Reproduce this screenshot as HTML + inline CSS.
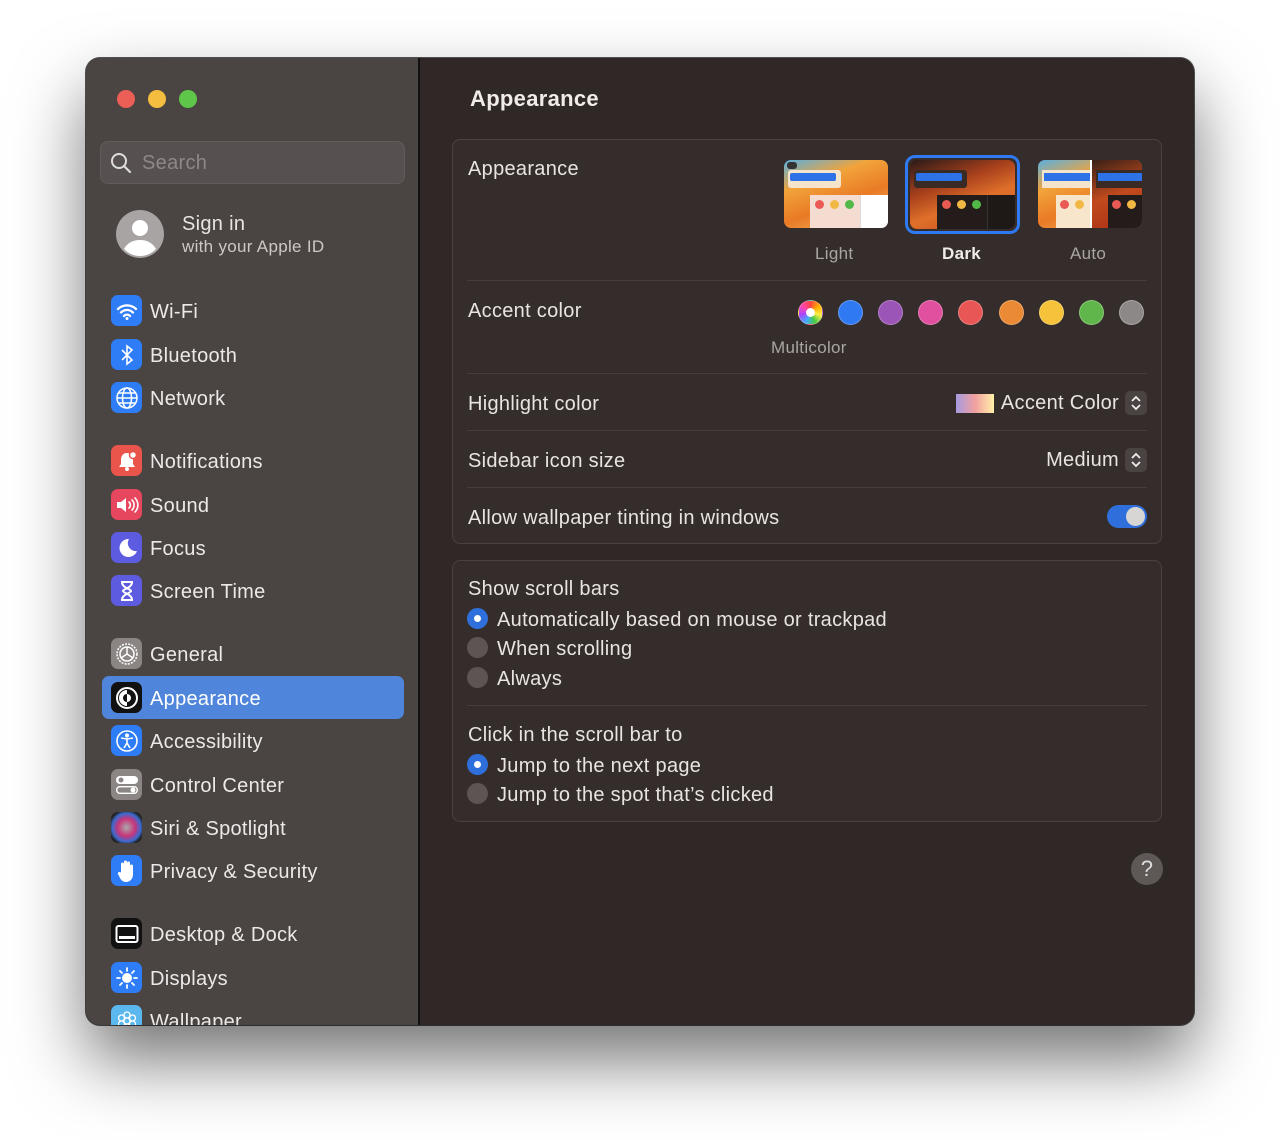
<!DOCTYPE html>
<html><head><meta charset="utf-8"><style>
*{margin:0;padding:0;box-sizing:border-box}
body{width:1280px;height:1140px;background:#fff;font-family:"Liberation Sans",sans-serif;position:relative;overflow:hidden;color:#e8e4e2;letter-spacing:0.3px}
.win{position:absolute;left:86px;top:58px;width:1108px;height:967px;border-radius:14px;background:#302826;overflow:hidden;box-shadow:0 35px 70px rgba(0,0,0,.55),0 0 0 1px #555;}
.side{position:absolute;left:0;top:0;width:334px;height:967px;background:#4a4442;border-right:2px solid #111}
.a{position:absolute}
.dot{position:absolute;top:32px;width:18px;height:18px;border-radius:50%}
.it{position:absolute;left:25px;height:31px;display:flex;align-items:center;font-size:20px;color:#eceae8;padding-top:3px}
.ic{width:31px;height:31px;border-radius:7px;margin-right:8px;display:flex;align-items:center;justify-content:center;flex:none;margin-top:-3px}
.grp{position:absolute;left:366px;width:710px;border:1px solid #4a4240;border-radius:8px;background:#352d2b}
.lbl{position:absolute;font-size:20px;color:#e8e4e2;line-height:24px;margin-top:1px}
.sep{position:absolute;left:14px;right:14px;height:1px;background:#463e3c}
.sw{position:absolute;top:241px;width:25px;height:25px;border-radius:50%;border:1px solid rgba(255,255,255,.25)}
.rad{position:absolute;left:14px;width:21px;height:21px;border-radius:50%;background:#5c5553}
.rad.on{background:#2f6fdc}
.rad.on::after{content:"";position:absolute;left:7px;top:7px;width:7px;height:7px;border-radius:50%;background:#fff}
.th{position:absolute;top:20px;width:104px;height:68px;border-radius:7px;overflow:hidden}
.step{display:inline-block;width:22px;height:24px;border-radius:5px;background:#4a4341;vertical-align:middle;margin-left:6px;position:relative}
</style></head><body>
<div class="win">
 <div class="side">
  <div class="dot" style="left:31px;background:#ec5f57"></div>
  <div class="dot" style="left:62px;background:#f4bd3f"></div>
  <div class="dot" style="left:93px;background:#5ec648"></div>
  <div class="a" style="left:14px;top:83px;width:305px;height:43px;border-radius:8px;background:#565050;border:1px solid #625b59"></div>
  <svg class="a" style="left:24px;top:94px" width="22" height="22" viewBox="0 0 22 22"><circle cx="9" cy="9" r="7" fill="none" stroke="#ddd" stroke-width="2"/><path d="M14 14l6 6" stroke="#ddd" stroke-width="2.2" stroke-linecap="round"/></svg>
  <div class="a" style="left:56px;top:94px;font-size:20px;color:#8f8886">Search</div>
  <svg class="a" style="left:29px;top:151px" width="50" height="50" viewBox="0 0 50 50"><circle cx="25" cy="25" r="24" fill="#a8a4a3"/><circle cx="25" cy="19" r="8" fill="#fff"/><path d="M9 40c4-7 10-9 16-9s12 2 16 9c-5 5-10 7-16 7s-11-2-16-7z" fill="#fff"/></svg>
  <div class="a" style="left:96px;top:155px;font-size:20px">Sign in</div>
  <div class="a" style="left:96px;top:179px;font-size:17px;color:#cdc8c6">with your Apple ID</div>

  <div class="a" style="left:16px;top:618px;width:302px;height:43px;border-radius:7px;background:#4f85da"></div>

  <div class="it" style="top:237px"><div class="ic" style="background:#2f7df6"><svg width="22" height="18" viewBox="0 0 22 18"><path d="M2 7a13 13 0 0 1 18 0M5 10.5a8.5 8.5 0 0 1 12 0M8 14a4 4 0 0 1 6 0" fill="none" stroke="#fff" stroke-width="2.3" stroke-linecap="round"/><circle cx="11" cy="16.5" r="1.5" fill="#fff"/></svg></div>Wi-Fi</div>
  <div class="it" style="top:281px"><div class="ic" style="background:#2f7df6"><svg width="14" height="22" viewBox="0 0 14 22"><path d="M2 6l10 10-5 4V2l5 4-10 10" fill="none" stroke="#fff" stroke-width="1.6"/></svg></div>Bluetooth</div>
  <div class="it" style="top:324px"><div class="ic" style="background:#2f7df6"><svg width="24" height="24" viewBox="0 0 24 24" fill="none" stroke="#fff" stroke-width="1.5"><circle cx="12" cy="12" r="10"/><ellipse cx="12" cy="12" rx="4.5" ry="10"/><path d="M2 12h20M4 7h16M4 17h16"/></svg></div>Network</div>
  <div class="it" style="top:387px"><div class="ic" style="background:#e9554a"><svg width="22" height="22" viewBox="0 0 22 22"><path d="M11 3c-4 0-6 3-6 7v4l-2 3h16l-2-3v-4c0-4-2-7-6-7z" fill="#fff"/><circle cx="11" cy="19" r="2" fill="#fff"/><circle cx="17" cy="5" r="3.5" fill="#fff" stroke="#e9554a" stroke-width="1.5"/></svg></div>Notifications</div>
  <div class="it" style="top:431px"><div class="ic" style="background:#e6475e"><svg width="24" height="20" viewBox="0 0 24 20"><path d="M2 7h4l5-4v14l-5-4H2z" fill="#fff"/><path d="M14 7a4 4 0 0 1 0 6M17 5a7 7 0 0 1 0 10M20 3a10 10 0 0 1 0 14" fill="none" stroke="#fff" stroke-width="1.6" stroke-linecap="round"/></svg></div>Sound</div>
  <div class="it" style="top:474px"><div class="ic" style="background:#5d5ce0"><svg width="22" height="22" viewBox="0 0 22 22"><path d="M13 2a9 9 0 1 0 8 12A8 8 0 0 1 13 2z" fill="#fff"/></svg></div>Focus</div>
  <div class="it" style="top:517px"><div class="ic" style="background:#5d5ce0"><svg width="16" height="22" viewBox="0 0 16 22"><path d="M2 2h12M2 20h12M3 2c0 6 9 7 9 9s-9 3-9 9M13 2c0 6-9 7-9 9s9 3 9 9" fill="none" stroke="#fff" stroke-width="2"/></svg></div>Screen Time</div>
  <div class="it" style="top:580px"><div class="ic" style="background:#8b8584"><svg width="26" height="26" viewBox="0 0 26 26" fill="none" stroke="#fff" stroke-width="1.5"><circle cx="13" cy="13" r="10" stroke-dasharray="2 1.2"/><circle cx="13" cy="13" r="7"/><path d="M13 13V6M13 13l6 4M13 13l-6 4"/></svg></div>General</div>
  <div class="it" style="top:624px"><div class="ic" style="background:#111"><svg width="24" height="24" viewBox="0 0 24 24"><circle cx="12" cy="12" r="10" fill="none" stroke="#fff" stroke-width="2"/><path d="M12 4a8 8 0 0 0 0 16z" fill="#fff"/><circle cx="12" cy="12" r="4" fill="#111"/><path d="M12 8a4 4 0 0 1 0 8z" fill="#fff"/></svg></div><span style="color:#fff">Appearance</span></div>
  <div class="it" style="top:667px"><div class="ic" style="background:#2f7df6"><svg width="24" height="24" viewBox="0 0 24 24" fill="none" stroke="#fff" stroke-width="1.6"><circle cx="12" cy="12" r="10"/><circle cx="12" cy="6.5" r="1.3" fill="#fff"/><path d="M6 9l6 1 6-1M12 10v4l-3 5M12 14l3 5"/></svg></div>Accessibility</div>
  <div class="it" style="top:711px"><div class="ic" style="background:#8b8584"><svg width="24" height="22" viewBox="0 0 24 22"><rect x="1" y="2" width="22" height="8" rx="4" fill="#fff"/><circle cx="6" cy="6" r="2.5" fill="#8b8584"/><rect x="1.7" y="12.7" width="20.6" height="6.6" rx="3.3" fill="none" stroke="#fff" stroke-width="1.4"/><circle cx="18" cy="16" r="2.5" fill="#fff"/></svg></div>Control Center</div>
  <div class="it" style="top:754px"><div class="ic" style="background:radial-gradient(circle,#aaa 0,#c7357a 40%,#3a6bd0 65%,#222 80%)"></div>Siri &amp; Spotlight</div>
  <div class="it" style="top:797px"><div class="ic" style="background:#2f7df6"><svg width="20" height="24" viewBox="0 0 20 24"><path d="M4 13V5a1.5 1.5 0 0 1 3 0v6V3a1.5 1.5 0 0 1 3 0v8V4a1.5 1.5 0 0 1 3 0v8V7a1.5 1.5 0 0 1 3 0v8c0 5-3 8-7 8-3 0-5-2-6-4l-2-4a1.5 1.5 0 0 1 3-1z" fill="#fff"/></svg></div>Privacy &amp; Security</div>
  <div class="it" style="top:860px"><div class="ic" style="background:#111"><svg width="24" height="20" viewBox="0 0 24 20"><rect x="1.5" y="2" width="21" height="16" rx="2" fill="none" stroke="#fff" stroke-width="2"/><rect x="4" y="12" width="16" height="3" fill="#fff"/></svg></div>Desktop &amp; Dock</div>
  <div class="it" style="top:904px"><div class="ic" style="background:#2f7df6"><svg width="24" height="24" viewBox="0 0 24 24"><circle cx="12" cy="12" r="5" fill="#fff"/><path d="M12 2v3M12 19v3M2 12h3M19 12h3M5 5l2 2M17 17l2 2M5 19l2-2M17 7l2-2" stroke="#fff" stroke-width="1.8" stroke-linecap="round"/></svg></div>Displays</div>
  <div class="it" style="top:947px"><div class="ic" style="background:#5ab8ee"><svg width="24" height="24" viewBox="0 0 24 24" fill="none" stroke="#fff" stroke-width="1.3"><circle cx="12" cy="12" r="3"/><circle cx="12" cy="6" r="3"/><circle cx="12" cy="18" r="3"/><circle cx="6.5" cy="9" r="3"/><circle cx="17.5" cy="9" r="3"/><circle cx="6.5" cy="15" r="3"/><circle cx="17.5" cy="15" r="3"/></svg></div>Wallpaper</div>
 </div>

 <div class="a" style="left:384px;top:28px;font-size:22px;font-weight:bold;color:#f0ecea">Appearance</div>

 <div class="grp" style="top:81px;height:405px">
  <div class="lbl" style="left:15px;top:16px">Appearance</div>
  <div class="th" style="left:331px;background:linear-gradient(160deg,#5ab0e0 0,#f2a33a 30%,#e97a26 60%,#f4c070 100%)">
   <div class="a" style="left:3px;top:2px;width:10px;height:7px;border-radius:3px;background:#333"></div>
   <div class="a" style="left:4px;top:10px;width:53px;height:18px;border-radius:3px;background:#f5e4cc"></div>
   <div class="a" style="left:6px;top:13px;width:46px;height:8px;border-radius:2px;background:#2e72e8"></div>
   <div class="a" style="left:26px;top:35px;width:78px;height:33px;background:#f5dcd0"></div>
   <div class="a" style="left:76px;top:35px;width:28px;height:33px;background:#fff;border-left:1px solid #ddd"></div>
   <div class="a" style="left:31px;top:40px;width:9px;height:9px;border-radius:50%;background:#ea5a55"></div>
   <div class="a" style="left:46px;top:40px;width:9px;height:9px;border-radius:50%;background:#f2b844"></div>
   <div class="a" style="left:61px;top:40px;width:9px;height:9px;border-radius:50%;background:#52b948"></div>
  </div>
  <div class="a" style="left:452px;top:15px;width:115px;height:79px;border-radius:10px;border:3px solid #2f79f2"></div>
  <div class="th" style="left:457px;top:20px;width:105px;height:69px;background:linear-gradient(160deg,#2a1a18 0,#a8401c 35%,#e0702a 60%,#c2441c 100%)">
   <div class="a" style="left:4px;top:10px;width:53px;height:18px;border-radius:3px;background:#3a2a24"></div>
   <div class="a" style="left:6px;top:13px;width:46px;height:8px;border-radius:2px;background:#2e72e8"></div>
   <div class="a" style="left:27px;top:35px;width:78px;height:34px;background:#241c1a"></div>
   <div class="a" style="left:77px;top:35px;width:28px;height:34px;background:#1e1816;border-left:1px solid #333"></div>
   <div class="a" style="left:32px;top:40px;width:9px;height:9px;border-radius:50%;background:#ea5a55"></div>
   <div class="a" style="left:47px;top:40px;width:9px;height:9px;border-radius:50%;background:#f2b844"></div>
   <div class="a" style="left:62px;top:40px;width:9px;height:9px;border-radius:50%;background:#52b948"></div>
  </div>
  <div class="th" style="left:585px;background:linear-gradient(160deg,#5ab0e0 0,#f2a33a 30%,#e97a26 60%,#f4c070 100%)">
   <div class="a" style="left:4px;top:10px;width:50px;height:18px;background:#f5e4cc"></div>
   <div class="a" style="left:6px;top:13px;width:46px;height:8px;background:#2e72e8"></div>
   <div class="a" style="left:18px;top:35px;width:34px;height:33px;background:#f8e6cc"></div>
   <div class="a" style="left:22px;top:40px;width:9px;height:9px;border-radius:50%;background:#ea5a55"></div>
   <div class="a" style="left:37px;top:40px;width:9px;height:9px;border-radius:50%;background:#f2b844"></div>
   <div class="a" style="left:52px;top:0;width:52px;height:68px;background:linear-gradient(160deg,#3a2018,#c24a1c 50%,#a83018);border-left:2px solid #fff"></div>
   <div class="a" style="left:58px;top:10px;width:46px;height:18px;background:#3a2a24"></div>
   <div class="a" style="left:60px;top:13px;width:44px;height:8px;background:#2e72e8"></div>
   <div class="a" style="left:70px;top:35px;width:34px;height:33px;background:#241c1a"></div>
   <div class="a" style="left:74px;top:40px;width:9px;height:9px;border-radius:50%;background:#ea5a55"></div>
   <div class="a" style="left:89px;top:40px;width:9px;height:9px;border-radius:50%;background:#f2b844"></div>
  </div>
  <div class="a" style="left:362px;top:104px;font-size:17px;color:#aaa4a2">Light</div>
  <div class="a" style="left:489px;top:104px;font-size:17px;font-weight:bold;color:#f0ecea">Dark</div>
  <div class="a" style="left:617px;top:104px;font-size:17px;color:#aaa4a2">Auto</div>
  <div class="sep" style="top:140px"></div>
  <div class="lbl" style="left:15px;top:158px">Accent color</div>
  <div class="sw" style="left:345px;top:160px;background:conic-gradient(#f44,#fa0,#fe4,#4c4,#4af,#a4f,#f4a,#f44)"><div class="a" style="left:7px;top:7px;width:9px;height:9px;border-radius:50%;background:#fff"></div></div>
  <div class="sw" style="left:385px;top:160px;background:#2f79f2"></div>
  <div class="sw" style="left:425px;top:160px;background:#9b55b6"></div>
  <div class="sw" style="left:465px;top:160px;background:#e0509e"></div>
  <div class="sw" style="left:505px;top:160px;background:#e85655"></div>
  <div class="sw" style="left:546px;top:160px;background:#ea8a35"></div>
  <div class="sw" style="left:586px;top:160px;background:#f5c23a"></div>
  <div class="sw" style="left:626px;top:160px;background:#60b64a"></div>
  <div class="sw" style="left:666px;top:160px;background:#8c8887"></div>
  <div class="a" style="left:318px;top:198px;font-size:17px;color:#aaa4a2">Multicolor</div>
  <div class="sep" style="top:233px"></div>
  <div class="lbl" style="left:15px;top:251px">Highlight color</div>
  <div class="a" style="right:14px;top:251px;font-size:20px;display:flex;align-items:center"><span style="display:inline-block;width:38px;height:19px;background:linear-gradient(90deg,#a59be0,#f2a0a0,#fff0a8);margin-right:7px"></span>Accent Color<span class="step"><svg width="22" height="24" viewBox="0 0 22 24"><path d="M7 10l4-4 4 4M7 14l4 4 4-4" fill="none" stroke="#eee" stroke-width="1.8"/></svg></span></div>
  <div class="sep" style="top:290px"></div>
  <div class="lbl" style="left:15px;top:308px">Sidebar icon size</div>
  <div class="a" style="right:14px;top:308px;font-size:20px;display:flex;align-items:center">Medium<span class="step"><svg width="22" height="24" viewBox="0 0 22 24"><path d="M7 10l4-4 4 4M7 14l4 4 4-4" fill="none" stroke="#eee" stroke-width="1.8"/></svg></span></div>
  <div class="sep" style="top:347px"></div>
  <div class="lbl" style="left:15px;top:365px">Allow wallpaper tinting in windows</div>
  <div class="a" style="left:654px;top:365px;width:40px;height:23px;border-radius:12px;background:#2f6fdc"><div class="a" style="left:19px;top:2px;width:19px;height:19px;border-radius:50%;background:#d8d6d5"></div></div>
 </div>

 <div class="grp" style="top:502px;height:262px">
  <div class="lbl" style="left:15px;top:15px">Show scroll bars</div>
  <div class="rad on" style="top:47px"></div><div class="lbl" style="left:44px;top:46px">Automatically based on mouse or trackpad</div>
  <div class="rad" style="top:76px"></div><div class="lbl" style="left:44px;top:75px">When scrolling</div>
  <div class="rad" style="top:106px"></div><div class="lbl" style="left:44px;top:105px">Always</div>
  <div class="sep" style="top:144px"></div>
  <div class="lbl" style="left:15px;top:161px">Click in the scroll bar to</div>
  <div class="rad on" style="top:193px"></div><div class="lbl" style="left:44px;top:192px">Jump to the next page</div>
  <div class="rad" style="top:222px"></div><div class="lbl" style="left:44px;top:221px">Jump to the spot that’s clicked</div>
 </div>

 <div class="a" style="left:1045px;top:795px;width:32px;height:32px;border-radius:50%;background:#5e5856;color:#ddd;font-size:22px;text-align:center;line-height:32px">?</div>
</div>
</body></html>
